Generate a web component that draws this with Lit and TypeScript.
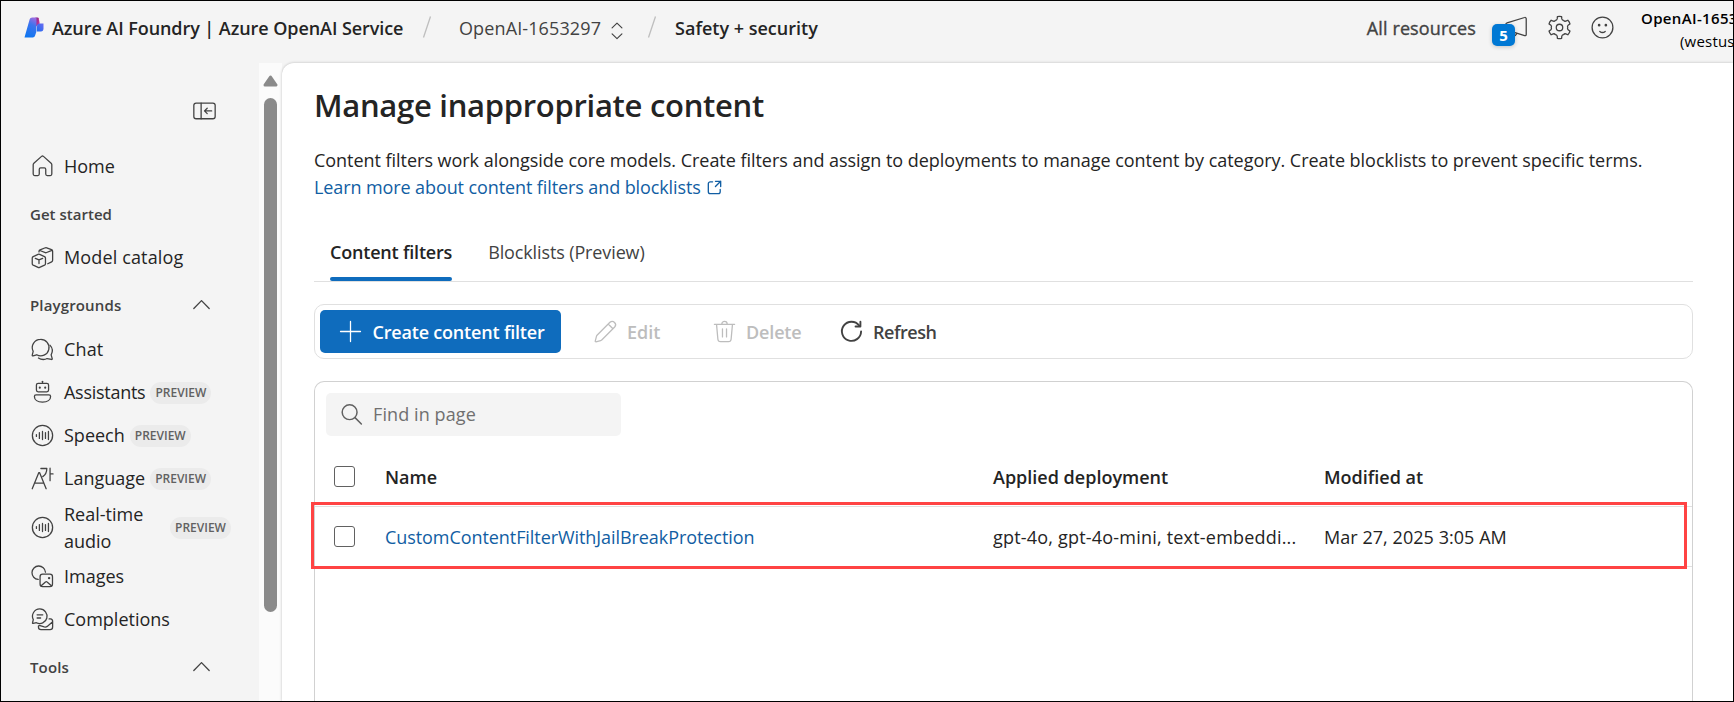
import { LitElement, html, css, svg, nothing } from "lit";
import { customElement, property, state } from "lit/decorators.js";
import { classMap } from "lit/directives/class-map.js";

const WAVE = svg`<circle cx="10" cy="10" r="7.5"/><path d="M5.500 9.300v1.400M7.700 7.800v4.400M10 7v6M12.200 7.800v4.400M14.400 7v6"/>`;

const ICONS: Record<string, unknown> = {
  home: svg`<path d="M9.300 2.500 3.600 7.600a1.500 1.500 0 0 0-.5 1.100v6.900c0 .7.500 1.100 1.100 1.100h2.300c.6 0 1.100-.5 1.100-1.100v-3.600c0-.6.400-1 1-1h2.800c.6 0 1 .4 1 1v3.600c0 .6.500 1.100 1.100 1.100h2.300c.6 0 1.100-.4 1.100-1.100V8.700c0-.4-.2-.8-.5-1.100L10.700 2.500a1.100 1.100 0 0 0-1.400 0Z"/>`,
  catalog: svg`<path d="M7.400 5.900V5.500c0-.5.3-.9.8-1.100l3.900-1.600c.3-.1.7-.1 1 0l3.600 1.400c.5.2.8.6.8 1.100v6.800c0 .5-.3.9-.7 1.100l-2.900 1.400M8 4.800l4.600 1.700 4.400-1.800"/>
    <path d="M2.400 10.400v4.200c0 .5.3.9.7 1.100l3.600 1.600c.4.2.8.2 1.200 0l3.600-1.600c.4-.2.7-.6.7-1.100v-4.200c0-.5-.3-.9-.7-1.100L7.900 7.700a1.600 1.600 0 0 0-1.200 0L3.100 9.300c-.4.200-.7.600-.7 1.100ZM4.700 10.600l2.700 1.200 2.700-1.200M7.400 11.800v2.700"/>`,
  chat: svg`<path d="M8.500 2.500a6.100 6.100 0 1 1-2.800 11.400l-2.700.8c-.4.100-.7-.2-.6-.6l.7-2.700A6.100 6.100 0 0 1 8.500 2.500Z"/>
    <path d="M7 16.300c1 .7 2.200 1.100 3.600 1.100 1 0 2-.2 2.800-.7l3.200.7c.4.100.7-.2.600-.6l-.8-2.800c1.300-2.400 1-5.200-.9-7.200"/>`,
  assistants: svg`<path d="M10 1.700v1.500"/><rect x="5.500" y="3.200" width="9" height="6.300" rx="1.300"/><path d="M5.200 11.700h9.600c.7 0 1.200.5 1.200 1.200 0 2.500-2.300 4.300-6 4.300s-6-1.800-6-4.300c0-.7.5-1.200 1.200-1.200Z"/><path class="solid" d="M7.200 6.400a.8.800 0 1 0 1.600 0 .8.800 0 1 0-1.600 0M11.200 6.400a.8.800 0 1 0 1.600 0 .8.800 0 1 0-1.600 0"/>`,
  speech: WAVE,
  language: svg`<path d="m2.400 17.600 4.900-12h.5l4.900 12M4 13.500h7"/><path d="M8.800 2.600h4.400c0 2.600-.7 4.500-3 6M15.600 2.400v9.200M15.600 6.600h2.200"/>`,
  images: svg`<path d="M6.800 12.200a5 5 0 1 1 5.400-5.400"/><rect x="8.200" y="8.300" width="9.200" height="9.200" rx="1.900"/><path d="m9 16.900 3.200-2.900c.4-.3.900-.3 1.200 0l3.200 2.900"/><path class="solid" d="M14 11.200a.9.900 0 1 0 1.800 0 .9.900 0 1 0-1.800 0"/>`,
  completions: svg`<path d="M8 2.200a5.400 5.400 0 1 1-2.500 10.200l-2.400.5c-.4.100-.6-.2-.5-.5l.6-2.300A5.400 5.400 0 0 1 8 2.200ZM6 6.500h4.200M6 8.900h2.600"/><path d="M7 14.800v.8c0 1 .8 1.900 1.900 1.900h6.700c1 0 1.900-.8 1.900-1.900v-4.300c0-.9-.7-1.600-1.600-1.700h-1M7.600 14.400l3.700 1.100c.8.200 1.500.1 2.200-.4l3.800-3.200"/>`,
  up: svg`<path d="m4.300 13 5.700-5.900 5.700 5.900"/>`,
  collapse: svg`<rect x="2.100" y="4.500" width="15.800" height="11.600" rx="1.700"/><path d="M7.500 4.500v11.600M15.300 10.300H10M12 8.300l-2 2 2 2"/>`,
  updown: svg`<path d="m5.900 7.400 4.100-4 4.100 4M5.900 12.400l4.100 4 4.100-4"/>`,
  megaphone: svg`<path d="M16 2.600 3 6.600c-.7.200-1 .8-1 1.400v2.600c0 .6.400 1.200 1 1.400l13 4c.7.200 1.200-.2 1.200-.9V3.500c0-.7-.6-1.100-1.200-.9ZM5.200 12.800v1a2.500 2.500 0 0 0 4.800 1"/>`,
  smile: svg`<circle cx="10" cy="10" r="7.700"/><path d="M8 12.900c1.100.9 2.900.9 4 0"/><path class="solid" d="M6.500 8.300a1 1 0 1 0 2 0 1 1 0 1 0-2 0M11.500 8.300a1 1 0 1 0 2 0 1 1 0 1 0-2 0"/>`,
  external: svg`<path d="M8 4H5.500A2 2 0 0 0 3.500 6v8.500a2 2 0 0 0 2 2H14a2 2 0 0 0 2-2V12M11 3.500h5.500V9M16.500 3.500 11 9"/>`,
  plus: svg`<path d="M10 2.600v14.800M2.600 10h14.800"/>`,
  edit: svg`<path d="m13.300 3.200-9.400 9.400c-.3.300-.5.600-.6 1l-.9 3.500c-.1.300.2.500.5.500l3.500-.9c.4-.1.700-.3 1-.6l9.400-9.400a2.480 2.480 0 0 0-3.500-3.500ZM12 4.500 15.500 8"/>`,
  delete: svg`<path d="M2.500 4.700h15M8 4.500a2 2 0 0 1 4 0M4.100 4.700l1 11c.1 1 .9 1.800 1.900 1.800h6c1 0 1.800-.8 1.900-1.800l1-11M8.500 8v6M11.500 8v6"/>`,
  refresh: svg`<path d="M15.700 5.600A7.100 7.100 0 1 0 17.100 10"/><path d="M16.600 2.700v3.600h-3.600"/>`,
  search: svg`<circle cx="8.600" cy="8.300" r="5.500"/><path d="m12.600 12.300 4.700 4.700"/>`,
};

@customElement("ui-icon")
class UiIcon extends LitElement {
  @property() name = "";
  static styles = css`
    :host { display: block; flex: none; width: 27px; height: 27px; }
    svg { display: block; width: 100%; height: 100%; fill: none; stroke: currentColor; stroke-width: var(--stroke, 0.95); stroke-linecap: round; stroke-linejoin: round; overflow: visible; }
    .solid { fill: currentColor; stroke: none; }
  `;
  render() {
    return this.name === "gear"
      ? html`<svg viewBox="0 0 20 20"><circle cx="10" cy="10" r="2.400"/><path d=${gearPath()}></path></svg>`
      : html`<svg viewBox="0 0 20 20">${ICONS[this.name]}</svg>`;
  }
}

/** Outline of a six-toothed cog on the 20-unit icon grid. */
function gearPath(): string {
  const at = (r: number, deg: number) => {
    const a = (deg * Math.PI) / 180;
    return `${(10 + r * Math.sin(a)).toFixed(2)} ${(10 - r * Math.cos(a)).toFixed(2)}`;
  };
  let d = `M${at(8.2, -11)}`;
  for (let i = 0; i < 6; i++) {
    const b = i * 60;
    d += `Q${at(8.5, b)} ${at(8.2, b + 11)}L${at(6.6, b + 15)}Q${at(5.7, b + 21)} ${at(6.1, b + 30)}Q${at(5.7, b + 39)} ${at(6.6, b + 45)}L${at(8.2, b + 49)}`;
  }
  return d + "Z";
}

interface NavEntry { label: string; icon: string; preview?: boolean; wrap?: boolean; fit?: string }
interface NavSection { title?: string; collapsible?: boolean; items: NavEntry[] }

const NAV: NavSection[] = [
  { items: [{ label: "Home", icon: "home" }] },
  { title: "Get started", items: [{ label: "Model catalog", icon: "catalog", fit: "wide" }] },
  {
    title: "Playgrounds", collapsible: true,
    items: [
      { label: "Chat", icon: "chat", fit: "wide" },
      { label: "Assistants", icon: "assistants", preview: true, fit: "narrow" },
      { label: "Speech", icon: "speech", preview: true },
      { label: "Language", icon: "language", preview: true },
      { label: "Real-time audio", icon: "speech", preview: true, wrap: true },
      { label: "Images", icon: "images" },
      { label: "Completions", icon: "completions" },
    ],
  },
  { title: "Tools", collapsible: true, items: [] },
];

@customElement("side-nav")
class SideNav extends LitElement {
  static styles = css`
    :host { display: flex; width: 281px; flex: none; color: #242424; }
    nav { width: 258px; padding-top: 35px; box-sizing: border-box; }
    .toggle { display: flex; justify-content: flex-end; padding-right: 41px; height: 47px; color: #424242; }
    .toggle ui-icon { margin-top: -1px; }
    .heading { display: flex; justify-content: space-between; height: 48px; padding: 3px 44px 0 29px; box-sizing: border-box; align-items: center; font-size: 15px; font-weight: 600; color: #424242; letter-spacing: 0.02px; }
    .heading.collapsible { height: 49px; padding-top: 3px; letter-spacing: 0.15px; }
    .heading ui-icon { margin: -2px 0 0; }
    .item { display: flex; align-items: center; height: 43px; padding-left: 28px; line-height: 27px; }
    .item ui-icon { margin-right: 8px; margin-top: -1px; color: #424242; }
    .item.wrap { height: 55px; }
    .wrap .label { width: 100px; margin-right: 6px; }
    .wide { letter-spacing: 0.14px; }
    .narrow { letter-spacing: -0.27px; }
    .badge { margin-left: 5px; height: 22px; line-height: 22px; padding: 0 5px; border-radius: 11px; background: #ebebeb; color: #616161; font-size: 12px; font-weight: 600; }
    .wrap .badge { margin-left: 0; }
    .track { flex: 1; background: #fbfbfb; display: flex; flex-direction: column; align-items: center; padding-right: 1px; }
    .track svg { display: block; margin-top: 12px; }
    .thumb { width: 13px; height: 514px; margin-top: 11px; border-radius: 7px; background: #8a8a8a; }
  `;
  render() {
    return html`
      <nav>
        <div class="toggle"><ui-icon name="collapse"></ui-icon></div>
        ${NAV.map((s) => html`
          ${s.title ? html`<div class=${classMap({ heading: true, collapsible: !!s.collapsible })}>
            <span>${s.title}</span>${s.collapsible ? html`<ui-icon name="up"></ui-icon>` : nothing}
          </div>` : nothing}
          ${s.items.map((i) => html`<div class=${classMap({ item: true, wrap: !!i.wrap })}>
            <ui-icon name=${i.icon}></ui-icon><span class="label ${i.fit ?? ""}">${i.label}</span>
            ${i.preview ? html`<span class="badge">PREVIEW</span>` : nothing}
          </div>`)}`)}
      </nav>
      <div class="track">
        <svg width="15" height="12" viewBox="0 0 15 12"><path d="M7.500 2 13 10H2Z" fill="#8a8a8a" stroke="#8a8a8a" stroke-width="3" stroke-linejoin="round"/></svg>
        <div class="thumb"></div>
      </div>`;
  }
}

@customElement("top-bar")
class TopBar extends LitElement {
  static styles = css`
    :host { display: flex; align-items: center; height: 62px; box-sizing: border-box; padding: 0 0 8px 23px; overflow: hidden; white-space: nowrap; color: #242424; line-height: 27px; }
    .logo { display: block; margin: 0 8px 2px 0; }
    .product { font-weight: 600; letter-spacing: -0.07px; width: 352px; }
    .slash { display: block; margin: 0 0 2px 18px; flex: none; }
    .resource { margin-left: 27px; color: #424242; letter-spacing: 0.12px; }
    .resource + ui-icon { width: 24px; height: 24px; margin: 5px 0 0 4px; color: #424242; }
    .resource ~ .slash { margin-left: 18px; }
    .page { font-weight: 600; margin-left: 18px; flex: 1; }
    .all { font-weight: 500; color: #424242; letter-spacing: 0.11px; margin-right: 27px; -webkit-text-stroke: 0.35px #424242; }
    .tools { display: flex; gap: 16px; color: #424242; margin-bottom: 2px; }
    .news { position: relative; }
    .count { position: absolute; left: -11px; top: 10px; width: 23px; height: 22px; line-height: 22px; border-radius: 5px; background: #0078d4; color: #fff; font-size: 15px; font-weight: 700; text-align: center; box-shadow: 0 1px 4px rgba(0, 0, 0, 0.2); }
    .account { width: 92px; margin-left: 25px; padding-top: 3px; font-size: 15px; line-height: 23px; color: #000; overflow: hidden; }
    .account b { display: block; font-weight: 600; letter-spacing: 0.35px; }
    .account span { display: block; padding-left: 39px; letter-spacing: 0.2px; }
  `;
  render() {
    const slash = html`<svg class="slash" width="10" height="22" viewBox="0 0 10 22"><path d="M8.500.500 1.500 21.500" stroke="#bdbdbd" stroke-width="1.300"/></svg>`;
    return html`
      <svg class="logo" width="20" height="21" viewBox="0 0 20 21">
        <defs>
          <linearGradient id="a" x1="0.700" y1="0" x2="0.400" y2="1"><stop offset="0" stop-color="#9a6be0"/><stop offset=".35" stop-color="#3d74ee"/><stop offset="1" stop-color="#0f76f0"/></linearGradient>
          <linearGradient id="b" x1="0" y1="0" x2="1" y2="1"><stop offset="0" stop-color="#7b2a86"/><stop offset="1" stop-color="#e0359b"/></linearGradient>
          <linearGradient id="c" x1="1" y1="0" x2="0" y2="1"><stop offset="0" stop-color="#6d6cf0"/><stop offset="1" stop-color="#1c6bf0"/></linearGradient>
        </defs>
        <path d="M11.500.500h2.300c.5 0 .8.300.9.800l1 5.200-3.700 3Z" fill="url(#b)"/>
        <path d="M19.500 6.500v5.300c0 1.500-1 2.700-2.500 2.700h-4V9.300c0-1.600 1-2.800 2.600-2.800Z" fill="url(#c)"/>
        <path d="M8.200.500h4.300v13.300c0 1-.4 2-.8 3l-.6 1.800c-.4 1.200-1.200 1.900-2.400 1.900H.5L5.600 2.500c.4-1.300 1.300-2 2.600-2Z" fill="url(#a)"/>
      </svg>
      <span class="product">Azure AI Foundry | Azure OpenAI Service</span>
      ${slash}
      <span class="resource">OpenAI-1653297</span><ui-icon name="updown"></ui-icon>
      ${slash}
      <span class="page">Safety + security</span>
      <span class="all">All resources</span>
      <div class="tools">
        <div class="news"><ui-icon name="megaphone"></ui-icon><span class="count">5</span></div>
        <ui-icon name="gear"></ui-icon>
        <ui-icon name="smile"></ui-icon>
      </div>
      <div class="account"><b>OpenAI-1653297</b><span>(westus</span></div>`;
  }
}

@customElement("filters-page")
class FiltersPage extends LitElement {
  @state() private tab = 0;
  static styles = css`
    :host { display: flex; flex-direction: column; flex: 1; min-width: 0; box-sizing: border-box; padding: 0 40px 0 32px; background: #fff; border-radius: 12px 0 0 0; box-shadow: 0 0 3px rgba(0, 0, 0, 0.24); color: #242424; line-height: 27px; }
    h1 { margin: 20px 0 0; font-size: 31px; line-height: 44px; font-weight: 600; letter-spacing: -0.29px; }
    p { margin: 20px 0 0; letter-spacing: -0.035px; white-space: nowrap; }
    a { color: #115ea3; letter-spacing: -0.07px; }
    .more { display: flex; align-items: center; letter-spacing: -0.1px; }
    .more ui-icon { width: 19px; height: 19px; margin-left: 4px; --stroke: 1.4; }
    .tabs { display: flex; margin-top: 38px; border-bottom: 1px solid #e0e0e0; }
    .tab { height: 42px; margin: 0 20px 0 16px; color: #424242; letter-spacing: -0.12px; }
    .tab.active { color: #242424; font-weight: 600; letter-spacing: -0.2px; display: flex; flex-direction: column; justify-content: space-between; }
    .tab.active::after { content: ""; height: 4px; border-radius: 2px; background: #0f6cbd; }
    .bar { display: flex; align-items: center; height: 55px; box-sizing: border-box; margin-top: 22px; padding-left: 5px; border: 1px solid #e0e0e0; border-radius: 10px; font-weight: 600; }
    .action { display: flex; align-items: center; gap: 8px; color: #bdbdbd; padding-top: 2px; box-sizing: border-box; }
    .primary { height: 43px; width: 241px; padding-left: 17px; border-radius: 5px; background: #0f6cbd; color: #fff; margin-right: 31px; letter-spacing: -0.19px; gap: 8.500px; }
    .edit { width: 119px; }
    .del { width: 127px; letter-spacing: -0.15px; }
    .refresh { color: #424242; letter-spacing: -0.45px; --stroke: 1.4; }
    .action ui-icon { margin-top: -3px; }
    .card { flex: 1; margin-top: 22px; border: 1px solid #d1d1d1; border-bottom: 0; border-radius: 10px 10px 0 0; }
    .find { display: flex; align-items: center; gap: 8px; width: 295px; height: 43px; box-sizing: border-box; margin: 11px 0 0 11px; padding-left: 12px; border-radius: 5px; background: #f4f4f4; color: #707070; letter-spacing: 0.1px; }
    .find ui-icon { color: #616161; --stroke: 1.1; }
    .table { margin-top: 11px; position: relative; }
    .row { display: grid; grid-template-columns: 51px 608px 331px 1fr; height: 60px; box-sizing: border-box; align-items: center; padding-left: 19px; border-bottom: 1px solid #e0e0e0; }
    .row span, .row a { padding-top: 2px; }
    .head { font-weight: 600; }
    .row i { width: 21px; height: 21px; box-sizing: border-box; border: 1px solid #616161; border-radius: 3px; }
    .apps { letter-spacing: 0.2px; }
    .date { letter-spacing: 0.05px; }
    .callout { position: absolute; left: -4px; right: 5px; top: 55px; height: 67px; box-sizing: border-box; border: 3px solid #ff4343; }
  `;
  render() {
    return html`
      <h1>Manage inappropriate content</h1>
      <p>Content filters work alongside core models. Create filters and assign to deployments to manage content by category. Create blocklists to prevent specific terms.</p>
      <a class="more">Learn more about content filters and blocklists <ui-icon name="external"></ui-icon></a>
      <div class="tabs">
        ${["Content filters", "Blocklists (Preview)"].map((t, i) => html`<div class=${classMap({ tab: true, active: this.tab === i })} @click=${() => (this.tab = i)}>${t}</div>`)}
      </div>
      <div class="bar">
        <div class="action primary"><ui-icon name="plus"></ui-icon>Create content filter</div>
        <div class="action edit"><ui-icon name="edit"></ui-icon>Edit</div>
        <div class="action del"><ui-icon name="delete"></ui-icon>Delete</div>
        <div class="action refresh"><ui-icon name="refresh"></ui-icon>Refresh</div>
      </div>
      <div class="card">
        <div class="find"><ui-icon name="search"></ui-icon>Find in page</div>
        <div class="table">
          <div class="row head"><i></i><span>Name</span><span>Applied deployment</span><span>Modified at</span></div>
          <div class="row"><i></i><a>CustomContentFilterWithJailBreakProtection</a><span class="apps">gpt-4o, gpt-4o-mini, text-embeddi...</span><span class="date">Mar 27, 2025 3:05 AM</span></div>
          <div class="callout"></div>
        </div>
      </div>`;
  }
}

@customElement("app-root")
class AppRoot extends LitElement {
  static styles = css`
    :host { display: flex; flex-direction: column; height: 702px; box-sizing: border-box; border: 1px solid #000; background: #f4f4f4; overflow: hidden; font-family: "Open Sans", "Noto Sans", sans-serif; font-size: 18px; }
    .body { display: flex; flex: 1; min-height: 0; }
  `;
  render() {
    return html`<top-bar></top-bar><div class="body"><side-nav></side-nav><filters-page></filters-page></div>`;
  }
}
